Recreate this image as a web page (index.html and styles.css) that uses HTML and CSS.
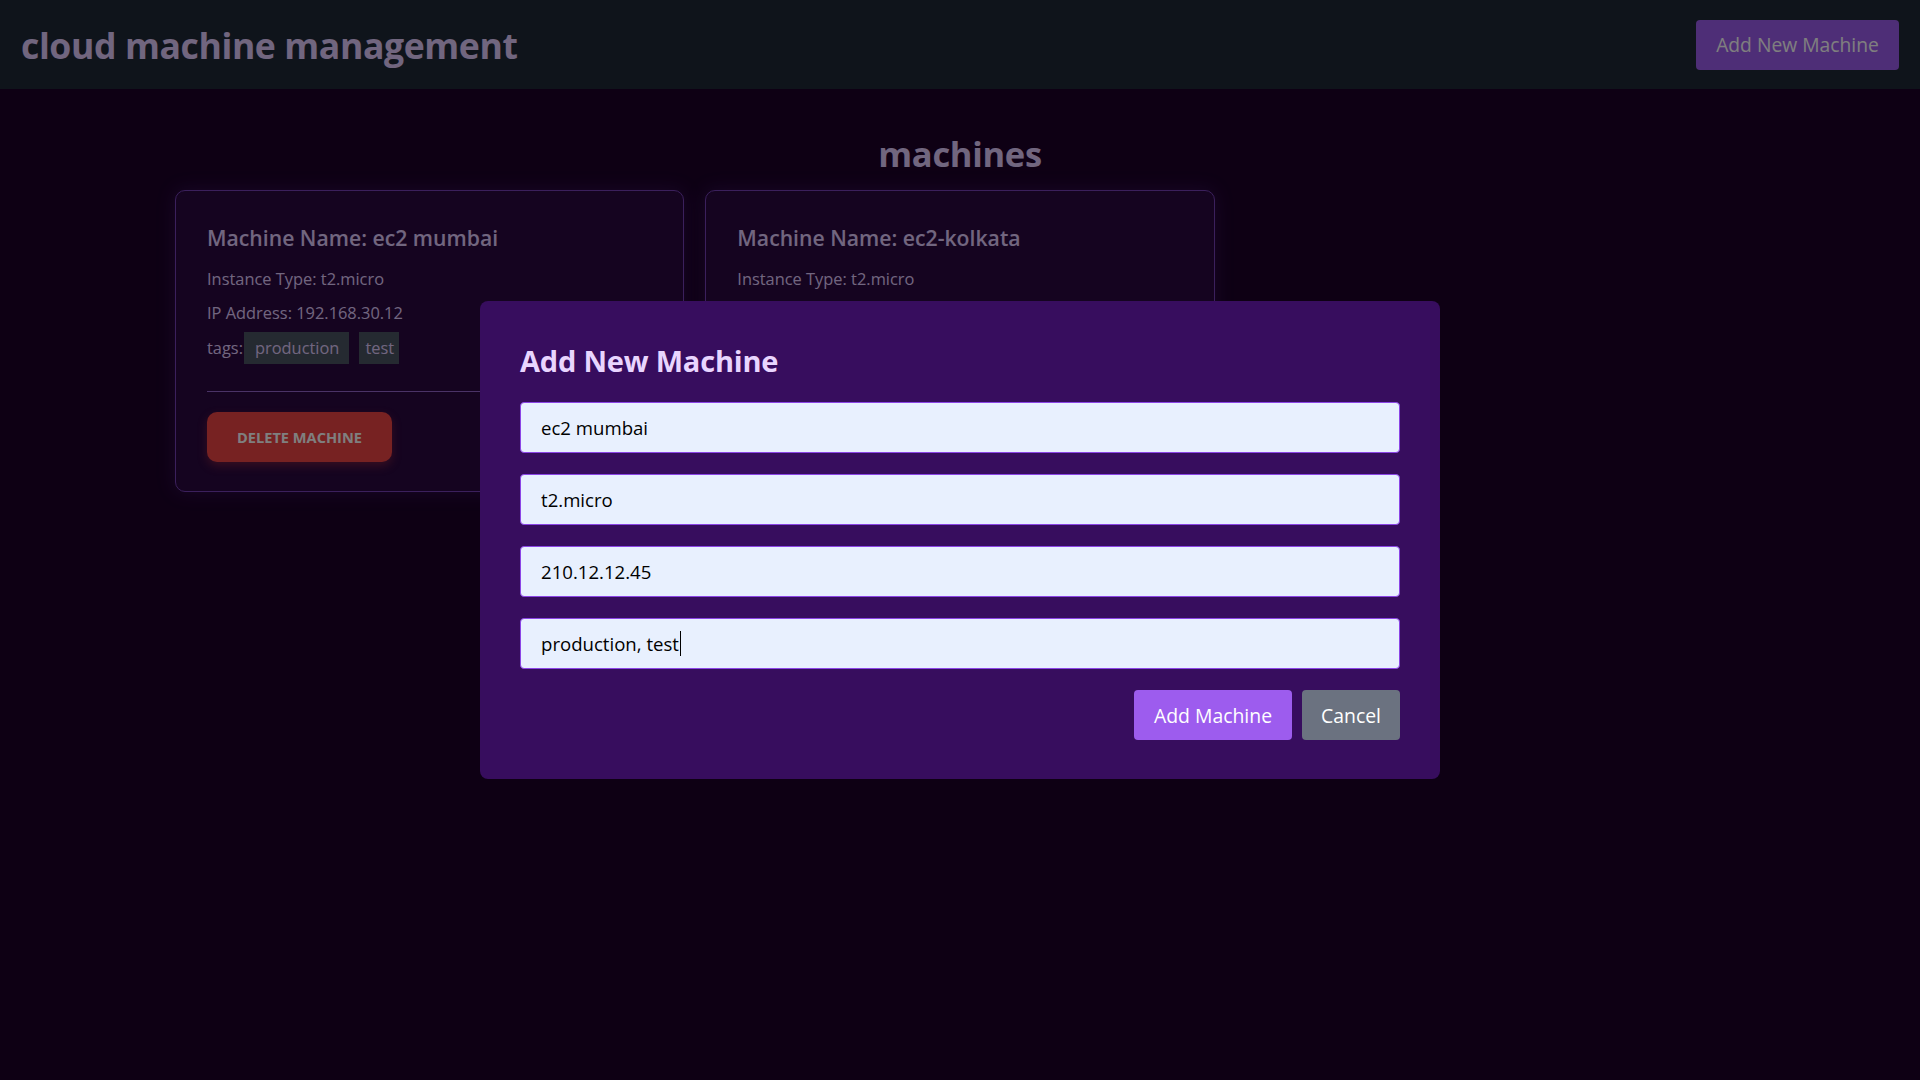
FILE: index.html
```html
<!DOCTYPE html>
<html lang="en">
<head>
<meta charset="utf-8">
<title>cloud machine management</title>
<link rel="stylesheet" href="styles.css">
</head>
<body>
<header class="topbar">
  <h1 class="brand">cloud machine management</h1>
  <button class="btn-primary btn-header">Add New Machine</button>
</header>
<main class="main">
  <h2 class="section-title">machines</h2>
  <div class="grid">
    <div class="card">
      <h3 class="card-title">Machine Name: ec2 mumbai</h3>
      <p class="card-line">Instance Type: t2.micro</p>
      <p class="card-line">IP Address: 192.168.30.12</p>
      <p class="card-line tags">tags:<span class="tag">production</span><span class="tag">test</span></p>
      <hr class="divider">
      <button class="btn-delete">Delete Machine</button>
    </div>
    <div class="card">
      <h3 class="card-title">Machine Name: ec2-kolkata</h3>
      <p class="card-line">Instance Type: t2.micro</p>
    </div>
  </div>
</main>
<div class="overlay">
  <div class="modal">
    <h2 class="modal-title">Add New Machine</h2>
    <input class="field" type="text" value="ec2 mumbai">
    <input class="field" type="text" value="t2.micro">
    <input class="field" type="text" value="210.12.12.45">
    <div class="field-wrap">
      <input class="field" id="tagsField" type="text" value="production, test">
      <span class="caret" id="caret"></span>
    </div>
    <div class="actions">
      <button class="btn-primary btn-add">Add Machine</button>
      <button class="btn-cancel">Cancel</button>
    </div>
  </div>
</div>
<script src="app.js"></script>
</body>
</html>
```
FILE: styles.css
```css
* { box-sizing: border-box; }
html, body { margin: 0; padding: 0; }
body {
  background: #1c0029;
  font-family: "Open Sans", "Noto Sans", sans-serif;
  color: #e2cdff;
  min-height: 1080px;
}
.topbar {
  height: 89px;
  background: #1f2937;
  display: flex;
  align-items: center;
  justify-content: space-between;
  padding: 0 21px 0 21px;
}
.brand {
  margin: 0;
  font-size: 35.6px;
  font-weight: 700;
  color: #e2cdff;
  letter-spacing: -0.4px;
}
.btn-primary {
  background: #9d5cee;
  color: #fff;
  border: none;
  border-radius: 4px;
  font-family: inherit;
  cursor: pointer;
}
.btn-header {
  width: 203px;
  height: 50px;
  font-size: 19.3px;
}
.main { padding-top: 44px; }
.section-title {
  margin: 0 0 15px;
  text-align: center;
  font-size: 34.5px;
  font-weight: 700;
  line-height: 42px;
  letter-spacing: -0.3px;
}
.grid {
  width: 1570px;
  margin: 0 auto;
  display: grid;
  grid-template-columns: repeat(3, 1fr);
  gap: 21px;
}
.card {
  background: #2a0840;
  border: 1px solid #7640b8;
  border-radius: 10px;
  padding: 32px 31px 29px;
  box-shadow: 0 0 18px rgba(120, 60, 200, 0.25);
}
.card-title {
  margin: 0 0 9px;
  font-size: 21.2px;
  font-weight: 600;
  line-height: 30px;
}
.card-line {
  margin: 0;
  font-size: 16.4px;
  line-height: 34px;
  font-weight: 400;
}
.tags { display: flex; align-items: center; height: 36px; }
.tag {
  display: inline-block;
  background: #4b5563;
  padding: 0 5px 0 6px;
  line-height: 32px;
  height: 32px;
  margin-right: 10px;
}
.tag:first-of-type { margin-left: 1px; padding: 0 10px 0 11px; }
.divider {
  border: none;
  border-top: 1px solid #9466cc;
  margin: 25px 0 20px;
}
.btn-delete {
  width: 185px;
  height: 50px;
  background: #ef4444;
  color: #fff;
  border: none;
  border-radius: 10px;
  text-transform: uppercase;
  font-family: inherit;
  font-weight: 700;
  font-size: 14.6px;
  display: block;
  box-shadow: 0 4px 10px rgba(239, 68, 68, 0.35);
}
.overlay {
  position: fixed;
  inset: 0;
  background: rgba(0, 0, 0, 0.5);
  display: flex;
  align-items: center;
  justify-content: center;
}
.modal {
  width: 960px;
  background: #370d5e;
  border-radius: 8px;
  padding: 36px 40px 39px;
  display: flex;
  flex-direction: column;
}
.modal-title {
  margin: 0 0 17px;
  font-size: 29px;
  font-weight: 700;
  line-height: 48px;
  color: #e9d5ff;
  letter-spacing: -0.2px;
}
.field {
  height: 51px;
  width: 100%;
  background: #e8f0fe;
  border: 1px solid #8b45e6;
  border-radius: 4px;
  padding: 0 20px;
  font-family: inherit;
  font-size: 18.6px;
  color: #000;
  margin-bottom: 21px;
  outline: none;
  display: block;
}
.field-wrap { position: relative; }
.caret {
  position: absolute;
  top: 13px;
  width: 1px;
  height: 25px;
  background: #000;
  left: 0;
}
.actions {
  display: flex;
  justify-content: flex-end;
  gap: 10px;
}
.btn-add {
  width: 158px;
  height: 50px;
  font-size: 19.4px;
}
.btn-cancel {
  width: 98px;
  height: 50px;
  background: #6b7280;
  color: #fff;
  border: none;
  border-radius: 4px;
  font-family: inherit;
  font-size: 19.4px;
}
```
FILE: app.js
```js
(function () {
  var f = document.getElementById('tagsField');
  var c = document.getElementById('caret');
  var cs = getComputedStyle(f);
  var ctx = document.createElement('canvas').getContext('2d');
  ctx.font = cs.fontWeight + ' ' + cs.fontSize + ' ' + cs.fontFamily;
  var w = ctx.measureText(f.value).width;
  c.style.left = (parseFloat(cs.paddingLeft) + parseFloat(cs.borderLeftWidth) + w + 1) + 'px';
})();
```
